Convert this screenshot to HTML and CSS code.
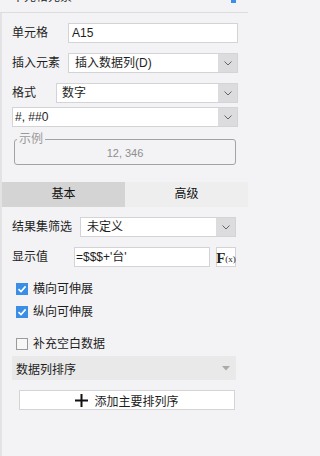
FILE: index.html
```html
<!DOCTYPE html>
<html lang="zh-CN">
<head>
<meta charset="utf-8">
<link rel="stylesheet" href="styles.css">
</head>
<body>
<div class="header"><span class="title">单元格元素</span><span class="pin"></span></div>
<div class="panel">
  <div class="top">
    <div class="row r1"><span class="label w56">单元格</span><div class="input grow">A15</div></div>
    <div class="row r2"><span class="label w56">插入元素</span><div class="select grow"><span class="val p6">插入数据列(D)</span><span class="arrow"><svg width="8" height="5" viewBox="0 0 8 5"><polyline points="0.5,0.5 4,4 7.5,0.5" fill="none" stroke="#666" stroke-width="1"/></svg></span></div></div>
    <div class="row r3"><span class="label w44">格式</span><div class="select grow"><span class="val p5">数字</span><span class="arrow"><svg width="8" height="5" viewBox="0 0 8 5"><polyline points="0.5,0.5 4,4 7.5,0.5" fill="none" stroke="#666" stroke-width="1"/></svg></span></div></div>
    <div class="row r4"><div class="select grow"><span class="val p2">#, ##0</span><span class="arrow"><svg width="8" height="5" viewBox="0 0 8 5"><polyline points="0.5,0.5 4,4 7.5,0.5" fill="none" stroke="#666" stroke-width="1"/></svg></span></div></div>
    <fieldset class="example"><legend>示例</legend><div class="sample">12, 346</div></fieldset>
  </div>
  <div class="tabs"><div class="tab active">基本</div><div class="tab">高级</div></div>
  <div class="basic">
    <div class="row rf"><span class="label w68">结果集筛选</span><div class="select grow"><span class="val p6">未定义</span><span class="arrow"><svg width="8" height="5" viewBox="0 0 8 5"><polyline points="0.5,0.5 4,4 7.5,0.5" fill="none" stroke="#666" stroke-width="1"/></svg></span></div></div>
    <div class="row rv"><span class="label w56">显示值</span><div class="input grow p2">=$$$+'台'</div><div class="fx"><span class="fx-f">F</span><span class="fx-x">(x)</span></div></div>
    <label class="check c1"><span class="box on"><svg width="12" height="12" viewBox="0 0 12 12"><polyline points="2.5,6.2 5,8.6 9.6,3.4" fill="none" stroke="#fff" stroke-width="1.6"/></svg></span>横向可伸展</label>
    <label class="check c2"><span class="box on"><svg width="12" height="12" viewBox="0 0 12 12"><polyline points="2.5,6.2 5,8.6 9.6,3.4" fill="none" stroke="#fff" stroke-width="1.6"/></svg></span>纵向可伸展</label>
    <label class="check c3"><span class="box"></span>补充空白数据</label>
    <div class="sortbar"><span>数据列排序</span><svg width="8" height="5" viewBox="0 0 8 5"><polygon points="0,0 8,0 4,4.5" fill="#aaa"/></svg></div>
    <div class="addbtn"><svg width="13" height="13" viewBox="0 0 13 13"><rect x="0" y="5.5" width="13" height="2" fill="#111"/><rect x="5.5" y="0" width="2" height="13" fill="#111"/></svg><span>添加主要排列序</span></div>
  </div>
</div>
</body>
</html>
```
FILE: styles.css
```css
html, body {
  margin: 0;
  padding: 0;
  background: #f3f3f5;
}
body {
  width: 248px;
  height: 456px;
  overflow: hidden;
  font-family: "Liberation Sans", "Noto Sans CJK SC", sans-serif;
  font-size: 12px;
  color: #1e1e1e;
}
.header {
  height: 12px;
  border-bottom: 1px solid #dcdcdc;
  overflow: hidden;
  display: flex;
  justify-content: space-between;
}
.title {
  margin: -9px 0 0 12px;
  line-height: 12px;
  height: 12px;
}
.pin {
  width: 5px;
  height: 3px;
  background: #3b8fe8;
  margin-right: 12px;
}
.panel {
  border-left: 2px solid #e3e3e5;
  height: 443px;
}
.top {
  padding: 10px 10px 0 10px;
}
.row {
  display: flex;
  align-items: center;
  height: 20px;
}
.r1, .r2 { margin-bottom: 10px; }
.r3 { margin-bottom: 4px; }
.label {
  flex: none;
  line-height: 20px;
  white-space: nowrap;
}
.w44 { width: 44px; }
.w56 { width: 56px; }
.w68 { width: 68px; }
.grow { flex: 1; min-width: 0; }
.input, .select {
  box-sizing: border-box;
  height: 20px;
  border: 1px solid #d4d4d6;
  background: #fff;
  line-height: 18px;
}
.input { padding-left: 3px; }
.input.p2 { padding-left: 1px; }
.select {
  display: flex;
  align-items: stretch;
}
.val { flex: 1; white-space: nowrap; }
.p2 { padding-left: 2px; }
.p5 { padding-left: 5px; }
.p6 { padding-left: 6px; }
.arrow {
  width: 19px;
  background: #dcdcde;
  display: flex;
  align-items: center;
  justify-content: center;
}
.example {
  margin: 6px 2px 0 2px;
  padding: 0 0 3px 0;
  border: 1px solid #a3a3a3;
  border-radius: 3px;
  min-width: 0;
}
.example legend {
  margin-left: 2px;
  padding: 0 2px;
  line-height: 12px;
  color: #9a9a9a;
}
.sample {
  text-align: center;
  line-height: 16px;
  font-size: 11px;
  color: #8e8e8e;
}
.tabs {
  display: flex;
  margin-top: 17px;
  height: 25px;
}
.tab {
  flex: 1;
  text-align: center;
  line-height: 25px;
  background: #eeeeef;
  color: #111;
}
.tab.active { background: #d4d4d5; }
.basic {
  padding: 10px 12px 0 10px;
}
.rf { margin-bottom: 10px; }
.rv { gap: 6px; }
.fx {
  box-sizing: border-box;
  width: 20px;
  height: 20px;
  border: 1px solid #d4d4d6;
  background: #fff;
  display: flex;
  align-items: flex-end;
  justify-content: center;
  font-family: "Liberation Serif", serif;
  line-height: 16px;
  color: #222;
}
.fx-f { font-weight: bold; font-size: 15px; }
.fx-x { font-size: 9px; line-height: 13px; }
.check {
  display: flex;
  align-items: center;
  height: 16px;
  margin-left: 4px;
  gap: 5px;
  line-height: 16px;
}
.c1 { margin-top: 14px; }
.c2 { margin-top: 7px; }
.c3 { margin-top: 16px; }
.box {
  box-sizing: border-box;
  width: 12px;
  height: 12px;
  border: 1px solid #9b9b9b;
  background: #f7f7f7;
  display: flex;
}
.box.on {
  border: none;
  background: #3a8ee6;
}
.sortbar {
  margin-top: 4px;
  height: 24px;
  background: #e9e9ea;
  display: flex;
  align-items: center;
  justify-content: space-between;
  padding: 0 6px 0 4px;
}
.addbtn {
  box-sizing: border-box;
  margin: 10px 1px 0 7px;
  height: 20px;
  border: 1px solid #d4d4d6;
  background: #fff;
  display: flex;
  align-items: center;
  justify-content: center;
  gap: 6px;
}
```
